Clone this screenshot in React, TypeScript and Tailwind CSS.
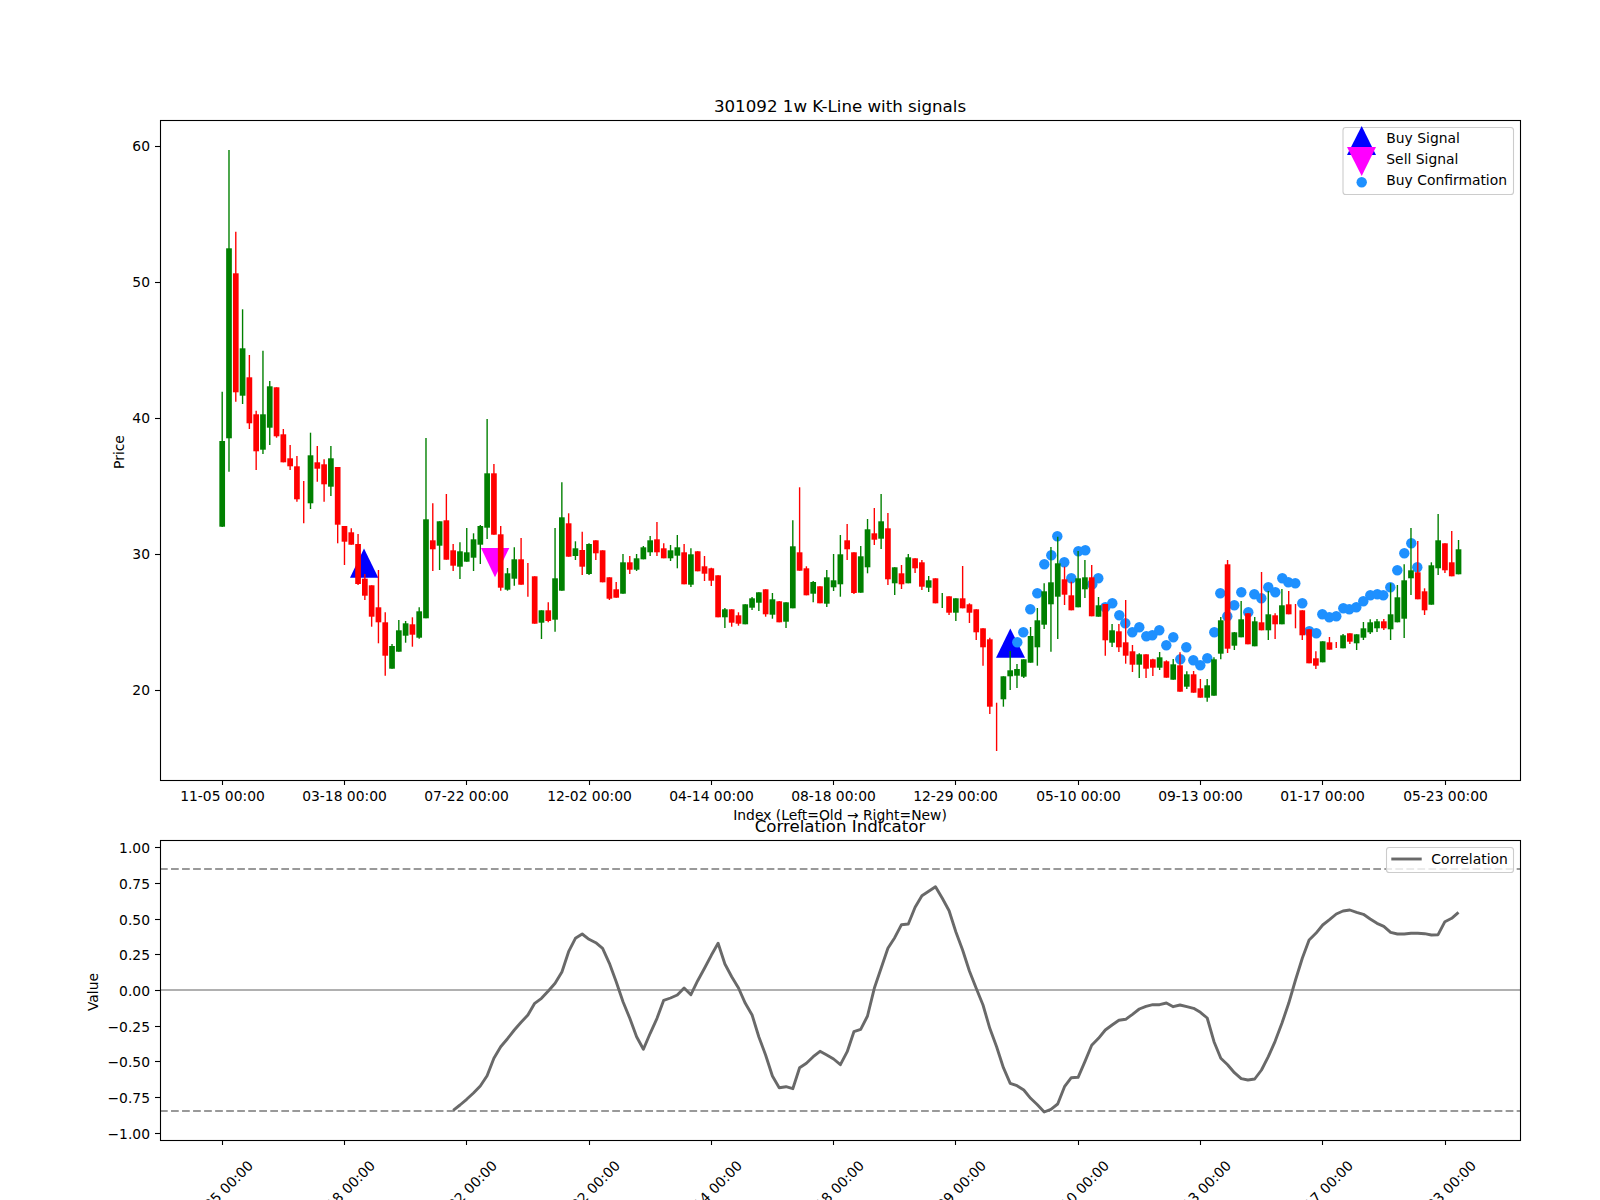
// Weekly K-line figure: price panel with signals, correlation panel below it.
// Chart values are in figure pixels, each svg's viewBox is its window into the figure.

type Candle = ['g' | 'r', number, number, number, number]; // colour, wick top, body top, body bottom, wick bottom

const candles: Candle[] = [
  ['g', 391.7, 441, 526.7, 527], ['g', 150, 248.3, 438.3, 471.7], ['r', 231.7, 273.3, 392.3, 401.7], ['g', 309.3, 348.3, 395.7, 404],
  ['r', 355, 377.3, 423.3, 429], ['r', 410.7, 414.3, 451.3, 470], ['g', 350.7, 414.3, 449.7, 454], ['g', 381, 386.3, 427.7, 445],
  ['r', 387.3, 387.3, 436.3, 437.7], ['r', 429, 434.3, 462.3, 462.3], ['r', 445, 458.3, 466.3, 470], ['r', 456, 466.3, 499.3, 501.7],
  ['r', 481, 500, 500, 523.3], ['g', 432.7, 455.3, 503.3, 509], ['r', 446, 462.3, 468.7, 481.7], ['r', 459.3, 464.3, 484.3, 501.7],
  ['g', 446, 458.3, 486.7, 496], ['r', 467, 467, 524.7, 543.3], ['r', 526, 526, 541.7, 565], ['r', 528.3, 532.3, 544.7, 544.7],
  ['r', 534, 544, 584, 585], ['r', 574, 578.7, 595.7, 600], ['r', 585.3, 585.3, 616.7, 626.7], ['r', 570, 607.3, 622.3, 643.3],
  ['r', 612.3, 622.3, 655.7, 675.7], ['g', 644, 646, 668.7, 668.7], ['g', 620, 630.3, 651.7, 651.7], ['g', 621, 623.3, 635.7, 642.7],
  ['r', 617.3, 624.3, 634.7, 646.7], ['g', 607.3, 611.3, 637.7, 638.7], ['g', 438, 519.3, 618.3, 618.3], ['r', 503.3, 540.3, 549.3, 571],
  ['g', 521.3, 521.3, 545.7, 570], ['r', 494, 520.3, 559.7, 559.7], ['r', 544, 550.3, 565.7, 571], ['g', 542.3, 551.3, 566.7, 579],
  ['g', 528, 552.3, 561.7, 561.7], ['g', 533.3, 539.3, 557.7, 571], ['g', 525, 526, 544.7, 564], ['g', 419, 473.3, 527.7, 539],
  ['r', 464, 473.3, 534.7, 534.7], ['r', 526, 534.3, 587.7, 590.7], ['g', 568, 573.3, 589.7, 590.7], ['g', 547.3, 559.3, 578.7, 585.7],
  ['r', 538, 559.3, 584.7, 584.7], ['r', 563, 580, 580, 596.7], ['r', 576.3, 576.3, 623.7, 623.7], ['g', 610.3, 610.3, 622.7, 639],
  ['r', 602.3, 610.3, 621, 622.3], ['g', 528, 578.3, 619.7, 631.7], ['g', 482.3, 517.3, 590.7, 590.7], ['r', 513.3, 523.3, 556.7, 556.7],
  ['g', 541.3, 548.3, 556, 560], ['r', 531.7, 550, 566.7, 575], ['g', 543.3, 544, 574, 575], ['r', 540.3, 540.3, 553.3, 560],
  ['r', 550.3, 550.3, 582.3, 582.3], ['r', 577.3, 577.3, 598.7, 600], ['r', 582, 589.3, 597.7, 597.7], ['g', 554, 562.3, 593.7, 593.7],
  ['r', 556, 562.3, 569.7, 574], ['g', 554, 558.3, 569.7, 571], ['g', 546, 547.3, 559.3, 559.3], ['g', 536, 540.3, 552.3, 556],
  ['r', 522, 539.3, 552.3, 556], ['r', 543.3, 548.3, 558.3, 558.3], ['g', 545, 550.3, 558.3, 561], ['g', 535, 547.3, 555.7, 568.3],
  ['r', 544, 552.3, 584.3, 584.3], ['g', 548.3, 554.3, 584.7, 587], ['r', 551.3, 551.3, 571.3, 571.3], ['r', 556, 566.3, 573.7, 581],
  ['r', 567.7, 568.3, 580.7, 586], ['r', 575.3, 575.3, 617.3, 617.3], ['g', 608, 609.3, 617.3, 628], ['r', 609.3, 609.3, 622.7, 626.7],
  ['r', 612.3, 615.3, 623.7, 625.7], ['g', 604.3, 604.3, 624.3, 624.3], ['g', 597, 598.3, 607.7, 610], ['g', 592.3, 592.3, 602.7, 611],
  ['r', 589.3, 589.3, 614.3, 616.7], ['g', 593, 599.3, 614.7, 618.7], ['r', 601, 601.3, 622.3, 622.3], ['g', 602.3, 602.3, 621.7, 628],
  ['g', 520.3, 546.3, 608.3, 608.3], ['r', 487.3, 552.3, 570.7, 570.7], ['r', 566.3, 568.3, 595.3, 595.3], ['g', 581, 582, 593.7, 602.3],
  ['r', 586.3, 586.3, 603.3, 603.3], ['g', 570, 577.3, 603.7, 607], ['g', 554, 580.3, 587.3, 591], ['g', 535, 554.3, 584.3, 596.7],
  ['r', 524, 540.3, 549.3, 560], ['r', 552.3, 552.3, 593, 594], ['g', 546, 556.3, 592.7, 592.7], ['g', 519, 529.3, 567.3, 573.3],
  ['r', 508, 533.3, 539.7, 545], ['g', 494, 521.3, 538.7, 549], ['r', 513, 528.3, 579.3, 585], ['g', 567.3, 567.3, 583.3, 595],
  ['r', 565, 573.3, 584.3, 589], ['g', 554, 557.3, 583.3, 583.3], ['r', 558.3, 558.3, 568.3, 573], ['r', 560, 562.3, 586.7, 590],
  ['g', 576, 580.3, 587.7, 592], ['r', 578.3, 578.3, 603.3, 603.3], ['g', 593, 600, 600, 608], ['r', 596.3, 596.3, 612.7, 615],
  ['g', 598.3, 598.3, 612.7, 621], ['r', 566, 598.3, 608.3, 608.3], ['r', 603.3, 604.3, 612.7, 623], ['r', 609.3, 609.3, 632.3, 640],
  ['r', 628.3, 628.3, 647.3, 665.7], ['r', 637.7, 639.3, 706.7, 714], ['r', 702.7, 720, 720, 751], ['g', 676.3, 676.3, 699.3, 706.7],
  ['g', 651, 670.3, 676.3, 690], ['g', 664, 669, 675.7, 688], ['g', 659.3, 659.3, 676.7, 678], ['g', 627, 636, 662.7, 662.7],
  ['g', 608, 620.3, 647.3, 665.7], ['g', 583.3, 591.3, 624.7, 629], ['g', 547, 582.3, 604.3, 651.7], ['g', 536.7, 563.3, 596.7, 639],
  ['r', 566.7, 579.3, 594.7, 605], ['r', 581.7, 595.3, 610.3, 610.3], ['g', 551, 578.3, 607.3, 607.3], ['g', 560, 577.3, 589.3, 598],
  ['r', 565, 577.3, 616.3, 616.3], ['g', 597, 605.3, 616.7, 616.7], ['r', 604, 604, 640.3, 655.7], ['g', 624, 630.3, 642.7, 647],
  ['r', 624, 631.3, 647.3, 652], ['r', 600, 642.3, 655.7, 663.7], ['r', 645, 651.3, 664.7, 672], ['g', 653.3, 654.3, 664.7, 678],
  ['r', 654.3, 654.3, 668.7, 678], ['r', 658.7, 659.3, 667.7, 676], ['g', 652, 657.3, 667.7, 670], ['r', 660.3, 661.3, 677.7, 677.7],
  ['g', 659, 664.3, 679.7, 679.7], ['r', 652.3, 665.3, 691.7, 691.7], ['g', 671.3, 674.3, 686.7, 689], ['r', 671, 674.3, 692.7, 692.7],
  ['r', 679, 688.3, 697.7, 697.7], ['g', 679, 685.3, 697.7, 701.7], ['g', 657.3, 659.3, 695.7, 695.7], ['g', 617, 620.3, 653.7, 659.3],
  ['r', 560, 564.3, 648.7, 653], ['g', 632, 632.3, 645.7, 650], ['g', 601, 619.3, 637.3, 637.3], ['r', 613.3, 613.3, 644.3, 644.3],
  ['g', 617, 621.3, 646.3, 646.3], ['r', 572, 622.3, 630.3, 630.3], ['g', 591, 614.3, 630.3, 640], ['r', 613.3, 615.3, 624.3, 639],
  ['g', 589, 605.3, 624.3, 624.3], ['r', 591, 604.3, 614.3, 614.3], ['r', 604, 615, 615, 628.3], ['r', 610.3, 610.3, 635.3, 640],
  ['r', 629.3, 629.3, 663.3, 663.3], ['r', 651.3, 658.3, 665.7, 669], ['g', 641.3, 641.3, 662.3, 662.3], ['r', 637, 642.3, 649.7, 649.7],
  ['r', 642, 645, 645, 648], ['g', 634, 635.3, 648.3, 648.3], ['r', 633.3, 633.3, 641.7, 644], ['g', 634.3, 634.3, 643.3, 650],
  ['g', 622, 628.3, 637.7, 640], ['g', 619.3, 622.3, 632.3, 634], ['g', 619, 621.3, 628.3, 632], ['r', 619, 621.3, 628.3, 630],
  ['g', 583.3, 614.3, 629.3, 640], ['g', 585, 597.3, 622.3, 622.3], ['g', 564.3, 580.3, 618.7, 638], ['g', 528, 570.3, 578.3, 595],
  ['r', 541, 572.3, 599.3, 599.3], ['r', 588.3, 591.3, 610.3, 615], ['g', 562.3, 565.3, 604.7, 604.7], ['g', 514, 540.3, 568.3, 575],
  ['r', 543.3, 543.3, 570.3, 573], ['r', 531, 562.3, 576.3, 576.3], ['g', 540, 549.3, 574.3, 574.3],
];

const confirmations = [
  [1017.3, 642.3], [1023.3, 632.3], [1030.3, 609.3], [1037.3, 593.3], [1044.3, 564.3], [1051.3, 555.3], [1057.3, 536.3], [1064.3, 562.3],
  [1071.3, 578.3], [1078.3, 551.3], [1085.3, 550.3], [1092.3, 584.3], [1098.3, 578.3], [1105.3, 607.3], [1112.3, 603.3], [1119.3, 615.3],
  [1125.3, 623.3], [1132.3, 632.3], [1139.3, 627.3], [1146.3, 636.3], [1152.3, 635.3], [1159.3, 630.3], [1166.3, 645.3], [1173.3, 637.3],
  [1180.3, 659.3], [1186.3, 647.3], [1193.3, 660.3], [1200.3, 665.3], [1207.3, 658.3], [1214.3, 632.3], [1220.3, 593.3], [1227.3, 616.3],
  [1234.3, 605.3], [1241.3, 592.3], [1248.3, 612.3], [1254.3, 594.3], [1261.3, 598.3], [1268.3, 587.3], [1275.3, 592.3], [1282.3, 578.3],
  [1288.3, 582.3], [1295.3, 583.3], [1302.3, 603.3], [1309.3, 631.3], [1316.3, 633.3], [1322.3, 614.3], [1329.3, 617.3], [1336.3, 616.3],
  [1343.3, 608.3], [1349.3, 609.3], [1356.3, 607.3], [1363.3, 601.3], [1370.3, 595.3], [1377.3, 594.3], [1383.3, 595.3], [1390.3, 587.3],
  [1397.3, 570.3], [1404.3, 553.3], [1411.3, 543.3], [1417.3, 567.3],
];

// one value per candle, the line starts at candle 34
const correlation = [
  1110.3, 1105, 1099.3, 1093, 1086, 1075.7, 1058.3, 1046.7, 1038.7, 1030, 1022.3, 1015, 1003.3, 998.3, 991, 983.3, 972, 951.7, 938.3, 934,
  939.3, 942.7, 948.3, 963.3, 981.7, 1001.7, 1018.3, 1036.7, 1049.3, 1033.3, 1018.3, 1000.3, 998, 995, 988, 994.7, 980.7, 968.3, 955.3, 943.3,
  964, 976.7, 988, 1003.3, 1015, 1036.7, 1055, 1076, 1087.7, 1086.7, 1088.7, 1067.7, 1063.3, 1056.7, 1051.3, 1055, 1059, 1064.7, 1051.7, 1031.7,
  1029.3, 1016, 988.3, 968.3, 948.3, 937.7, 924.7, 924, 907.3, 895.7, 891.3, 886.7, 898.3, 910.7, 931.7, 950, 971, 988.3, 1005, 1028.3,
  1046.7, 1067.7, 1083.3, 1085.7, 1090, 1098.3, 1104.7, 1112, 1109.3, 1104, 1086.7, 1077.7, 1077.3, 1061.7, 1045.3, 1038.3, 1030, 1025, 1020.3, 1019.3,
  1014.3, 1009, 1006.3, 1004.7, 1004.7, 1003, 1006.7, 1005, 1006.7, 1008.3, 1012.3, 1018, 1041.7, 1058.3, 1064.7, 1072.7, 1078.7, 1080, 1079, 1070,
  1056.7, 1041.3, 1023.3, 1003.3, 980, 958.3, 940, 933.3, 925, 919.7, 914, 911, 910, 912.3, 914.3, 919, 923.3, 926.3, 932.3, 934,
  934, 933.3, 933.3, 933.7, 935, 934.7, 921.7, 918.3, 912.3,
];

const candleX = (i: number) => 222.2 + 6.793 * i;
const corrPoints = correlation.map((y, i) => `${candleX(i + 34).toFixed(1)},${y}`).join(' ');

const xTicks = [
  { x: 222.5, label: '11-05 00:00' },
  { x: 344.5, label: '03-18 00:00' },
  { x: 466.5, label: '07-22 00:00' },
  { x: 589.5, label: '12-02 00:00' },
  { x: 711.5, label: '04-14 00:00' },
  { x: 833.5, label: '08-18 00:00' },
  { x: 955.5, label: '12-29 00:00' },
  { x: 1078.5, label: '05-10 00:00' },
  { x: 1200.5, label: '09-13 00:00' },
  { x: 1322.5, label: '01-17 00:00' },
  { x: 1445.5, label: '05-23 00:00' },
];

const priceTicks = [
  { y: 146.5, label: '60' },
  { y: 282.5, label: '50' },
  { y: 418.5, label: '40' },
  { y: 554.5, label: '30' },
  { y: 690.5, label: '20' },
];

const valueTicks = [
  { y: 847.5, label: '1.00' },
  { y: 883.5, label: '0.75' },
  { y: 919.5, label: '0.50' },
  { y: 954.5, label: '0.25' },
  { y: 990.5, label: '0.00' },
  { y: 1026.5, label: '−0.25' },
  { y: 1061.5, label: '−0.50' },
  { y: 1097.5, label: '−0.75' },
  { y: 1133.5, label: '−1.00' },
];

function YAxis({ ticks, shift }: { ticks: { y: number; label: string }[]; shift: number }) {
  return (
    <>
      {ticks.map((t) => (
        <g key={t.label}>
          <line x1={155} x2={160} y1={t.y} y2={t.y} stroke="#000" strokeWidth={1.1} />
          <text x={150} y={t.y + shift} textAnchor="end">{t.label}</text>
        </g>
      ))}
    </>
  );
}

function Frame({ top, bottom }: { top: number; bottom: number }) {
  return <rect x={160.5} y={top} width={1360} height={bottom - top} fill="none" stroke="#000" strokeWidth={1.1} />;
}

export default function App() {
  return (
    <div className="flex h-[1200px] w-[1600px] flex-col gap-[60px] overflow-hidden bg-white pl-[160px] pt-[120px] font-['DejaVu_Sans',sans-serif] text-[13.89px] text-black">
      {/* Price panel */}
      <svg viewBox="160 120 1360 660" className="h-[660px] w-[1360px] shrink-0 overflow-visible fill-black">
        <text x={840} y={111.7} textAnchor="middle" className="text-[16.67px]">301092 1w K-Line with signals</text>

        <polygon points="364,548.5 350,577.7 378.3,577.7" fill="#0000ff" />
        <polygon points="1010.3,628.5 996,657.7 1025,657.7" fill="#0000ff" />
        <polygon points="481,548 509.3,548 495,577.3" fill="#ff00ff" />

        {confirmations.map(([x, y]) => (
          <circle key={x} cx={x} cy={y} r={5.2} fill="#1e90ff" />
        ))}

        {candles.map(([c, wickTop, bodyTop, bodyBottom, wickBottom], i) => {
          const color = c === 'g' ? '#008000' : '#ff0000';
          const x = candleX(i);
          return (
            <g key={i}>
              <line x1={x} x2={x} y1={wickTop} y2={wickBottom} stroke={color} strokeWidth={1.39} />
              {bodyBottom > bodyTop && <rect x={x - 2.85} y={bodyTop} width={5.7} height={bodyBottom - bodyTop} fill={color} />}
            </g>
          );
        })}

        <Frame top={120.5} bottom={780.5} />
        <YAxis ticks={priceTicks} shift={4} />
        {xTicks.map((t) => (
          <g key={t.label}>
            <line x1={t.x} x2={t.x} y1={780} y2={785} stroke="#000" strokeWidth={1.1} />
            <text x={t.x} y={801} textAnchor="middle">{t.label}</text>
          </g>
        ))}
        <text x={840} y={820} textAnchor="middle">Index (Left=Old → Right=New)</text>
        <text x={124} y={452} textAnchor="middle" transform="rotate(-90 124 452)">Price</text>

        {/* Legend */}
        <rect x={1343} y={127.5} width={170.5} height={67} rx={2.8} fill="#fff" fillOpacity={0.8} stroke="#ccc" strokeWidth={1.1} />
        <polygon points="1361.7,126 1347,155 1376,155" fill="#0000ff" />
        <polygon points="1347,147 1376,147 1361.7,176" fill="#ff00ff" />
        <circle cx={1361.7} cy={182.3} r={5.2} fill="#1e90ff" />
        <text x={1386.3} y={143}>Buy Signal</text>
        <text x={1386.3} y={164}>Sell Signal</text>
        <text x={1386.3} y={184.7}>Buy Confirmation</text>
      </svg>

      {/* Correlation panel */}
      <svg viewBox="160 840 1360 300" className="h-[300px] w-[1360px] shrink-0 overflow-visible fill-black">
        <text x={840} y={831.7} textAnchor="middle" className="text-[16.67px]">Correlation Indicator</text>

        <line x1={160} x2={1520} y1={869} y2={869} stroke="#999999" strokeWidth={2.08} strokeDasharray="7.7 3.33" />
        <line x1={160} x2={1520} y1={1111} y2={1111} stroke="#999999" strokeWidth={2.08} strokeDasharray="7.7 3.33" />
        <line x1={160} x2={1520} y1={990} y2={990} stroke="#b0b0b0" strokeWidth={2.08} />
        <polyline points={corrPoints} fill="none" stroke="#696969" strokeWidth={2.9} strokeLinejoin="round" />

        <Frame top={840.5} bottom={1140.5} />
        <YAxis ticks={valueTicks} shift={5} />
        {xTicks.map((t) => (
          <g key={t.label}>
            <line x1={t.x} x2={t.x} y1={1140} y2={1145} stroke="#000" strokeWidth={1.1} />
            <text x={t.x - 2} y={1198} textAnchor="middle" transform={`rotate(-45 ${t.x - 2} 1193)`}>{t.label}</text>
          </g>
        ))}
        <text x={98} y={992} textAnchor="middle" transform="rotate(-90 98 992)">Value</text>

        {/* Legend */}
        <rect x={1386.5} y={847.5} width={127} height={25} rx={2.8} fill="#fff" fillOpacity={0.8} stroke="#ccc" strokeWidth={1.1} />
        <line x1={1391.3} x2={1421.7} y1={859} y2={859} stroke="#696969" strokeWidth={2.9} />
        <text x={1431.3} y={864}>Correlation</text>
      </svg>
    </div>
  );
}
